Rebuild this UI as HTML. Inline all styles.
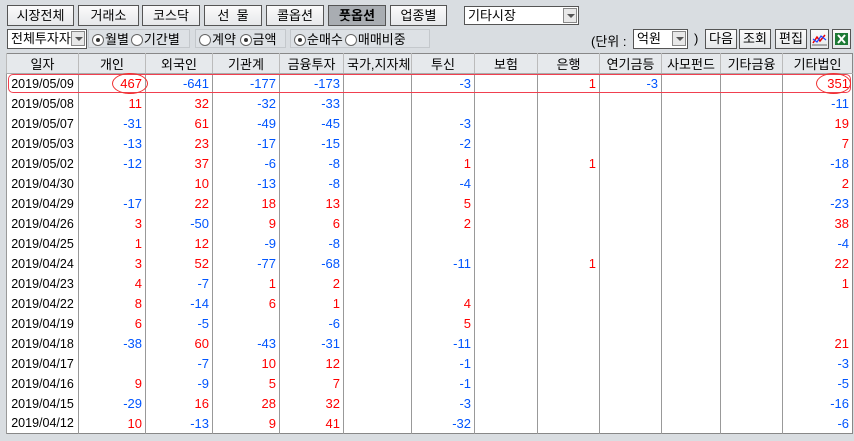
<!DOCTYPE html>
<html><head><meta charset="utf-8"><style>
*{box-sizing:border-box;margin:0;padding:0}
body{width:854px;height:441px;background:#d9dde1;font-family:"Liberation Sans","Noto Sans CJK KR","NanumGothic",sans-serif;font-size:13px;position:relative;overflow:hidden;color:#000}
.b{position:absolute;top:5px;height:21px;background:linear-gradient(#fbfbfb,#e6e8ea);border:1px solid #555;text-align:center;line-height:19px;font-size:13px}
.b.on{background:#a9adb2;font-weight:bold}
.dd{position:absolute;background:#fff;border:1px solid #555;height:19px;line-height:17px;padding-left:3px;font-size:13px}
.dd i{position:absolute;right:1px;top:1px;width:14px;height:15px;background:#e8e8e8;border:1px solid #888}
.dd i:after{content:"";position:absolute;left:3px;top:5px;border-left:4px solid transparent;border-right:4px solid transparent;border-top:4px solid #555}
.grp{position:absolute;top:29px;height:19px;border:1px solid #c4c8cc;background:#dde1e5}
.r{position:absolute;top:2px;font-size:13px;line-height:15px;white-space:nowrap}
.r b{display:inline-block;width:12px;height:12px;border-radius:50%;border:1px solid #666;background:#fff;vertical-align:-2px;margin-right:1px;position:relative}
.r b.c:after{content:"";position:absolute;left:3px;top:3px;width:4px;height:4px;border-radius:50%;background:#333}
.sb{position:absolute;top:29px;height:20px;border:1px solid #555;background:linear-gradient(#fbfbfb,#e6e8ea);text-align:center;line-height:18px}
table{position:absolute;left:6px;top:53px;border-collapse:collapse;background:#fff;border:1px solid #888;table-layout:fixed;width:846px}
td,th{height:20px;padding:0 3px;font-weight:normal;font-size:13px;border-left:1px solid #999;text-align:right;white-space:nowrap;overflow:hidden}
th{background:#e6e9ec;text-align:center;border-bottom:1px solid #aaa;border-left:1px solid #bbb}
td:first-child{text-align:center;font-size:12.5px}
.p{color:#f00}.n{color:#0055ff}
</style></head><body>
<div class="b" style="left:7px;width:67px">시장전체</div>
<div class="b" style="left:78px;width:61px">거래소</div>
<div class="b" style="left:142px;width:58px">코스닥</div>
<div class="b" style="left:204px;width:58px">선 &nbsp;물</div>
<div class="b" style="left:266px;width:58px">콜옵션</div>
<div class="b on" style="left:328px;width:58px">풋옵션</div>
<div class="b" style="left:390px;width:57px">업종별</div>
<div class="dd" style="left:464px;top:6px;width:115px">기타시장<i></i></div>
<div class="dd" style="left:7px;top:29px;width:80px;height:20px">전체투자자<i></i></div>
<div class="grp" style="left:88px;width:102px"><span class="r" style="left:3px"><b class="c"></b>월별<b style="margin-left:2px"></b>기간별</span></div>
<div class="grp" style="left:195px;width:91px"><span class="r" style="left:3px"><b></b>계약 <b class="c"></b>금액</span></div>
<div class="grp" style="left:290px;width:140px"><span class="r" style="left:3px"><b class="c"></b>순매수<b style="margin-left:2px"></b>매매비중</span></div>
<div style="position:absolute;left:591px;top:31px">(단위 :</div>
<div class="dd" style="left:633px;top:29px;width:55px;height:20px">억원<i></i></div>
<div style="position:absolute;left:694px;top:31px">)</div>
<div class="sb" style="left:705px;width:32px">다음</div>
<div class="sb" style="left:739px;width:32px">조회</div>
<div class="sb" style="left:775px;width:32px">편집</div>
<div class="sb" style="left:810px;width:19px"><svg width="17" height="16" style="position:absolute;left:0;top:1px"><path d="M2 12L6 6L9 10L14 4" stroke="#e00" fill="none" stroke-width="1.5"/><path d="M2 8L6 11L10 5L15 9" stroke="#24f" fill="none" stroke-width="1.2"/><path d="M1 14H16" stroke="#666"/></svg></div>
<div class="sb" style="left:832px;width:19px"><svg width="17" height="16" style="position:absolute;left:0;top:1px"><rect x="2" y="2" width="13" height="12" fill="#1d7a35"/><path d="M5 4L12 12M12 4L5 12" stroke="#fff" stroke-width="2"/></svg></div>
<table>
<colgroup><col style="width:72px"><col style="width:67px"><col style="width:67px"><col style="width:67px"><col style="width:64px"><col style="width:68px"><col style="width:63px"><col style="width:63px"><col style="width:62px"><col style="width:62px"><col style="width:59px"><col style="width:62px"><col style="width:70px"></colgroup>
<tr><th>일자</th><th>개인</th><th>외국인</th><th>기관계</th><th>금융투자</th><th>국가,지자체</th><th>투신</th><th>보험</th><th>은행</th><th>연기금등</th><th>사모펀드</th><th>기타금융</th><th>기타법인</th></tr>
<tr><td>2019/05/09</td><td class="p">467</td><td class="n">-641</td><td class="n">-177</td><td class="n">-173</td><td></td><td class="n">-3</td><td></td><td class="p">1</td><td class="n">-3</td><td></td><td></td><td class="p">351</td></tr>
<tr><td>2019/05/08</td><td class="p">11</td><td class="p">32</td><td class="n">-32</td><td class="n">-33</td><td></td><td></td><td></td><td></td><td></td><td></td><td></td><td class="n">-11</td></tr>
<tr><td>2019/05/07</td><td class="n">-31</td><td class="p">61</td><td class="n">-49</td><td class="n">-45</td><td></td><td class="n">-3</td><td></td><td></td><td></td><td></td><td></td><td class="p">19</td></tr>
<tr><td>2019/05/03</td><td class="n">-13</td><td class="p">23</td><td class="n">-17</td><td class="n">-15</td><td></td><td class="n">-2</td><td></td><td></td><td></td><td></td><td></td><td class="p">7</td></tr>
<tr><td>2019/05/02</td><td class="n">-12</td><td class="p">37</td><td class="n">-6</td><td class="n">-8</td><td></td><td class="p">1</td><td></td><td class="p">1</td><td></td><td></td><td></td><td class="n">-18</td></tr>
<tr><td>2019/04/30</td><td></td><td class="p">10</td><td class="n">-13</td><td class="n">-8</td><td></td><td class="n">-4</td><td></td><td></td><td></td><td></td><td></td><td class="p">2</td></tr>
<tr><td>2019/04/29</td><td class="n">-17</td><td class="p">22</td><td class="p">18</td><td class="p">13</td><td></td><td class="p">5</td><td></td><td></td><td></td><td></td><td></td><td class="n">-23</td></tr>
<tr><td>2019/04/26</td><td class="p">3</td><td class="n">-50</td><td class="p">9</td><td class="p">6</td><td></td><td class="p">2</td><td></td><td></td><td></td><td></td><td></td><td class="p">38</td></tr>
<tr><td>2019/04/25</td><td class="p">1</td><td class="p">12</td><td class="n">-9</td><td class="n">-8</td><td></td><td></td><td></td><td></td><td></td><td></td><td></td><td class="n">-4</td></tr>
<tr><td>2019/04/24</td><td class="p">3</td><td class="p">52</td><td class="n">-77</td><td class="n">-68</td><td></td><td class="n">-11</td><td></td><td class="p">1</td><td></td><td></td><td></td><td class="p">22</td></tr>
<tr><td>2019/04/23</td><td class="p">4</td><td class="n">-7</td><td class="p">1</td><td class="p">2</td><td></td><td></td><td></td><td></td><td></td><td></td><td></td><td class="p">1</td></tr>
<tr><td>2019/04/22</td><td class="p">8</td><td class="n">-14</td><td class="p">6</td><td class="p">1</td><td></td><td class="p">4</td><td></td><td></td><td></td><td></td><td></td><td></td></tr>
<tr><td>2019/04/19</td><td class="p">6</td><td class="n">-5</td><td></td><td class="n">-6</td><td></td><td class="p">5</td><td></td><td></td><td></td><td></td><td></td><td></td></tr>
<tr><td>2019/04/18</td><td class="n">-38</td><td class="p">60</td><td class="n">-43</td><td class="n">-31</td><td></td><td class="n">-11</td><td></td><td></td><td></td><td></td><td></td><td class="p">21</td></tr>
<tr><td>2019/04/17</td><td></td><td class="n">-7</td><td class="p">10</td><td class="p">12</td><td></td><td class="n">-1</td><td></td><td></td><td></td><td></td><td></td><td class="n">-3</td></tr>
<tr><td>2019/04/16</td><td class="p">9</td><td class="n">-9</td><td class="p">5</td><td class="p">7</td><td></td><td class="n">-1</td><td></td><td></td><td></td><td></td><td></td><td class="n">-5</td></tr>
<tr><td>2019/04/15</td><td class="n">-29</td><td class="p">16</td><td class="p">28</td><td class="p">32</td><td></td><td class="n">-3</td><td></td><td></td><td></td><td></td><td></td><td class="n">-16</td></tr>
<tr><td>2019/04/12</td><td class="p">10</td><td class="n">-13</td><td class="p">9</td><td class="p">41</td><td></td><td class="n">-32</td><td></td><td></td><td></td><td></td><td></td><td class="n">-6</td></tr>
</table>
<div style="position:absolute;left:8px;top:74px;width:843px;height:19px;border:1.5px solid #f04050;border-radius:5px"></div>
<div style="position:absolute;left:112px;top:73px;width:36px;height:21px;border:1.5px solid #f03030;border-radius:50%"></div>
<div style="position:absolute;left:816px;top:73px;width:35px;height:21px;border:1.5px solid #f03030;border-radius:50%"></div>
</body></html>
